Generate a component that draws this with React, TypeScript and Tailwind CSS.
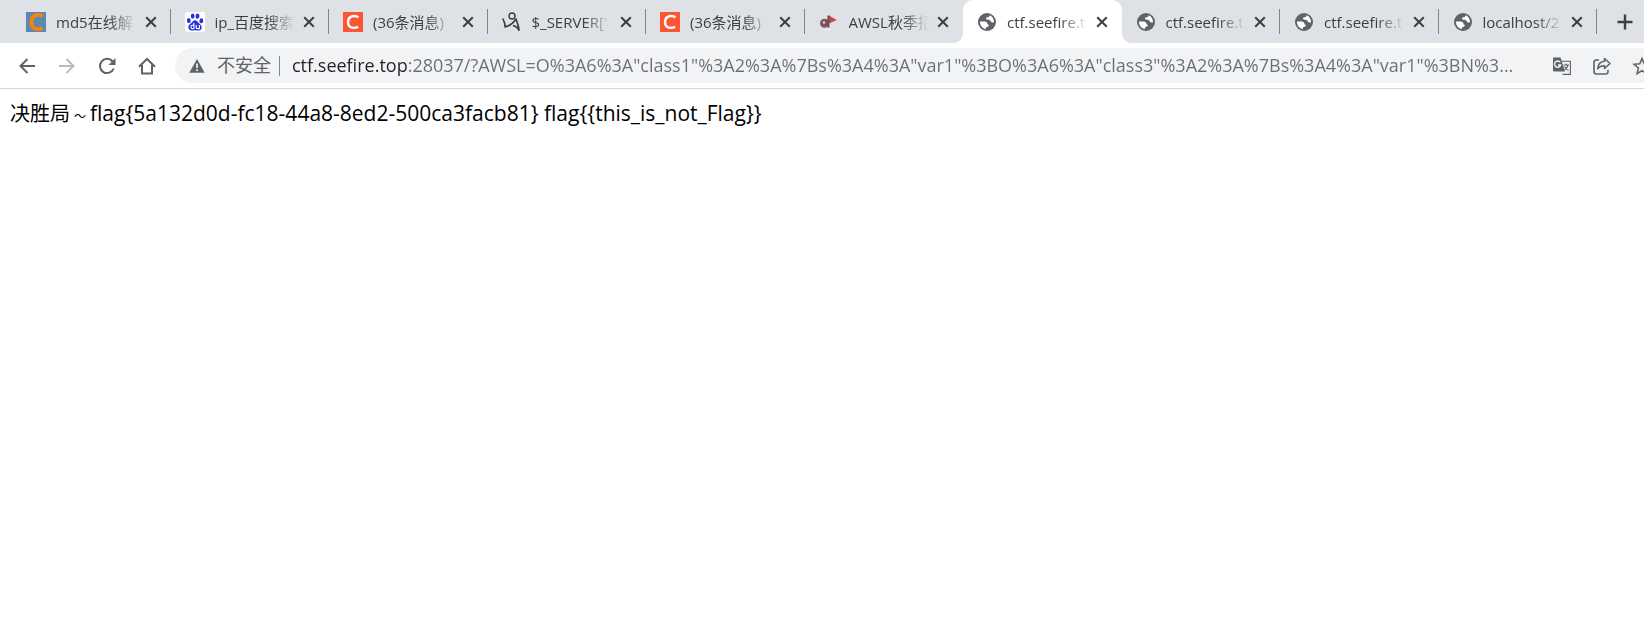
import React from "react";

const font = "font-['Open_Sans','Noto_Sans_CJK_SC',sans-serif]";

function GlobeIcon() {
  return (
    <svg viewBox="0 0 20 20" className="size-5" aria-hidden="true">
      <circle cx="10" cy="10" r="9" fill="#5f6368" />
      <path
        d="M12.600 3.200c-.2 1.500-1 2-2.300 2.100-1 .1-1.300.6-1.300 1.300 0 .8.6 1.100 1.500 1.100 2 0 3 .6 3.400 1.900.2.700.8.900 1.500.9H17c.2-3.600-1.700-6.200-4.400-7.300z"
        fill="#fff"
      />
      <path d="M3 9.600h4.600c1.700 0 2.900 1 2.900 2.500 0 .5.3.7.8.7h.6c0 1.300-.8 2.100-2.100 2.100-.6 0-.8.3-.8.800v1.200C5.600 16.600 3 13.700 3 10z" fill="#fff" />
    </svg>
  );
}

function OrangeCIcon() {
  return (
    <svg viewBox="0 0 20 20" className="size-5" aria-hidden="true">
      <path d="M0 0h20v20H0z" fill="#5b89b4" />
      <path d="M16.500 4.200C10.500.800 5.400 4.200 5.400 10s5 9.200 11.100 5.800" fill="none" stroke="#f98207" strokeWidth="3.800" />
    </svg>
  );
}

function PawIcon() {
  return (
    <svg viewBox="0 0 20 20" className="size-5" aria-hidden="true">
      <rect width="20" height="20" rx="2" fill="#fff" />
      <g fill="#2932e1">
        <ellipse cx="3.800" cy="8.600" rx="1.900" ry="2.500" transform="rotate(-10 3.800 8.600)" />
        <ellipse cx="7.700" cy="4.100" rx="1.900" ry="2.600" />
        <ellipse cx="12.500" cy="4.100" rx="1.900" ry="2.600" transform="rotate(10 12.500 4.100)" />
        <ellipse cx="16.300" cy="8.800" rx="1.900" ry="2.500" transform="rotate(10 16.300 8.800)" />
        <path d="M10 8.200c1.600 0 2.400 1.300 3.500 2.600 1.300 1.400 3.200 2.500 3.200 4.600 0 2-1.500 3.200-3.300 3.100-1.200 0-2.200-.3-3.400-.3s-2.200.4-3.400.3c-1.900 0-3.300-1.200-3.300-3.200 0-2 1.900-3.100 3.200-4.500C7.600 9.500 8.400 8.200 10 8.200z" />
      </g>
      <path d="M8.900 11v5.800M8.900 13.300H7.200c-1.600 0-1.600 3.300 0 3.300h1.700M11.200 13v2.600c0 .7.400 1 1 1h2.200V13" fill="none" stroke="#fff" strokeWidth="1.100" />
    </svg>
  );
}

function RedCIcon() {
  return (
    <svg viewBox="0 0 20 20" className="size-5" aria-hidden="true">
      <path d="M0 0h20v20H0z" fill="#fc5531" />
      <path d="M15.500 5.200C10 2.400 5 5 5 10.200c0 5 4.800 7 10.200 4.700" fill="none" stroke="#fff" strokeWidth="2.400" />
    </svg>
  );
}

function FigureIcon() {
  return (
    <svg viewBox="0 0 20 20" className="size-5" fill="none" stroke="#3c3c3c" aria-hidden="true">
      <circle cx="10" cy="4" r="3" strokeWidth="1.400" />
      <path d="M.8 6.500C2 9 3.200 11.500 3.200 14.800c4-.6 7.600-3.200 11-7.800" strokeWidth="1.700" />
      <path d="M13.800 6.500c1.500 3.600 2.800 7.800 3.400 12.300-1.200-3-3-4.500-6.200-5.300" strokeWidth="1.700" />
    </svg>
  );
}

function FlagIcon() {
  return (
    <svg viewBox="0 0 20 20" className="size-5" aria-hidden="true">
      <path d="M4 17h9l-2 2H6z" fill="#ebebed" />
      <path d="M10 3.500 17.800 8 10 11.500z" fill="#d2434b" />
      <circle cx="5.500" cy="11.200" r="3.400" fill="#b9303d" stroke="#6b6165" strokeWidth="2.200" />
      <path d="M9.400 3.500V15.500" stroke="#5d5256" strokeWidth="2" />
      <circle cx="5" cy="10.500" r="1.300" fill="#f4c6ca" />
    </svg>
  );
}

type TabData = { title: string; icon: React.ReactNode; active?: boolean; divider?: boolean };

const tabs: TabData[] = [
  { title: "md5在线解", icon: <OrangeCIcon />, divider: true },
  { title: "ip_百度搜索", icon: <PawIcon />, divider: true },
  { title: "(36条消息)", icon: <RedCIcon />, divider: true },
  { title: "$_SERVER['", icon: <FigureIcon />, divider: true },
  { title: "(36条消息)", icon: <RedCIcon />, divider: true },
  { title: "AWSL秋季招", icon: <FlagIcon /> },
  { title: "ctf.seefire.t", icon: <GlobeIcon />, active: true },
  { title: "ctf.seefire.t", icon: <GlobeIcon />, divider: true },
  { title: "ctf.seefire.t", icon: <GlobeIcon />, divider: true },
  { title: "localhost/2", icon: <GlobeIcon />, divider: true },
];

function Tab({ title, icon, active, divider }: TabData) {
  return (
    <div
      role="tab"
      aria-selected={!!active}
      className={`relative flex h-full min-w-0 flex-1 items-center pl-3.5 pr-2.5 ${active ? "rounded-t-[10px] bg-white" : ""}`}
    >
      {active && (
        <>
          <span className="absolute bottom-0 -left-2.5 size-2.5 bg-[radial-gradient(circle_at_0_0,transparent_10px,#fff_10px)]" />
          <span className="absolute bottom-0 -right-2.5 size-2.5 bg-[radial-gradient(circle_at_100%_0,transparent_10px,#fff_10px)]" />
        </>
      )}
      <span className="shrink-0">{icon}</span>
      <span className="ml-2.5 min-w-0 flex-1 overflow-hidden whitespace-nowrap text-[15px] leading-6 text-[#3c4043] [mask-image:linear-gradient(to_right,#000_65%,transparent)]">
        {title}
      </span>
      <button type="button" aria-label="关闭" className="ml-1 flex size-5 shrink-0 items-center justify-center">
        <svg viewBox="0 0 12 12" className="size-3" stroke="#3c4043" strokeWidth="2" aria-hidden="true">
          <path d="m1.200 1.200 9.600 9.600m0-9.600-9.600 9.600" />
        </svg>
      </button>
      {divider && <span className="absolute right-0 h-[25px] w-px bg-[#80868b]" />}
    </div>
  );
}

function ToolButton({ label, children }: { label: string; children: React.ReactNode }) {
  return (
    <button type="button" aria-label={label} className="flex h-9 w-10 shrink-0 items-center justify-center text-[#5f6368]">
      {children}
    </button>
  );
}

export default function App() {
  return (
    <div className={`min-h-screen overflow-hidden bg-white ${font}`}>
      <header>
        <div className="flex h-[43px] bg-[#dee1e6] pl-3">
          <div role="tablist" className="flex min-w-0 flex-1">
            {tabs.map((tab, i) => (
              <Tab key={i} {...tab} />
            ))}
          </div>
          <button type="button" aria-label="新标签页" className="flex w-[47px] shrink-0 items-center justify-center pl-2">
            <svg viewBox="0 0 16 16" className="size-4" stroke="#3c4043" strokeWidth="2.400" aria-hidden="true">
              <path d="M8 .500v15M.500 8h15" />
            </svg>
          </button>
        </div>

        <div className="flex h-[46px] items-center border-b border-[#d5d6d8] pl-[7px]">
          <ToolButton label="后退">
            <svg viewBox="0 0 16 16" className="size-4" fill="none" stroke="currentColor" strokeWidth="2" aria-hidden="true">
              <path d="M16 8H1.500M8.500 1 1.500 8l7 7" />
            </svg>
          </ToolButton>
          <ToolButton label="前进">
            <svg viewBox="0 0 16 16" className="size-4" fill="none" stroke="#babcbe" strokeWidth="2" aria-hidden="true">
              <path d="M0 8h14.500M7.500 1l7 7-7 7" />
            </svg>
          </ToolButton>
          <ToolButton label="重新加载">
            <svg viewBox="0 0 18 18" className="size-[18px]" aria-hidden="true">
              <path d="M15.700 11.500A7.100 7.100 0 1 1 14.600 4.500" fill="none" stroke="currentColor" strokeWidth="2" />
              <path d="M17.500 1v7h-7z" fill="currentColor" />
            </svg>
          </ToolButton>
          <ToolButton label="主页">
            <svg viewBox="0 0 18 18" className="size-[18px]" fill="none" stroke="currentColor" strokeWidth="2" aria-hidden="true">
              <path d="M1 9.800 9 2l8 7.800M4 8v8.500h10V8" />
            </svg>
          </ToolButton>

          <form className="ml-2 flex h-[35px] min-w-0 flex-1 items-center rounded-l-full bg-[#f1f3f4] pl-3.5" onSubmit={(e) => e.preventDefault()}>
            <button type="button" className="flex shrink-0 items-center gap-3 whitespace-nowrap text-lg leading-6 text-[#5f6368]">
              <svg viewBox="0 0 16 16" className="size-4" aria-hidden="true">
                <path d="M8 1 .300 14.800h15.400z" fill="#5f6368" />
                <path d="M8 5.500v4.600M8 11.200v1.800" stroke="#f1f3f4" strokeWidth="1.700" />
              </svg>
              <span className="pb-0.5">不安全</span>
            </button>
            <span className="mx-2 h-5 w-px shrink-0 bg-[#80868b]" />
            <input
              aria-label="地址和搜索栏"
              type="text"
              spellCheck={false}
              defaultValue={'ctf.seefire.top:28037/?AWSL=O%3A6%3A"class1"%3A2%3A%7Bs%3A4%3A"var1"%3BO%3A6%3A"class3"%3A2%3A%7Bs%3A4%3A"var1"%3BN%3...'}
              className="ml-1 h-full min-w-0 flex-1 bg-[linear-gradient(to_right,#202124_117px,#6b6e72_117px)] bg-clip-text pb-0.5 text-lg text-transparent outline-none"
            />
            <div className="-mr-[18px] flex shrink-0">
              <ToolButton label="翻译此页">
                <svg viewBox="0 0 20 20" className="size-5" aria-hidden="true">
                  <path d="M9 5.200h9.400v13.200h-7.900" fill="none" stroke="#5f6368" strokeWidth="1.100" />
                  <path d="M2.200 1.500h6.300l4.500 14H2.200A1.200 1.200 0 0 1 1 14.300V2.700A1.200 1.200 0 0 1 2.200 1.500z" fill="#5f6368" />
                  <path d="M8.200 6.400A3.100 3.100 0 1 0 8.600 9H6" fill="none" stroke="#f1f3f4" strokeWidth="1.400" />
                  <path d="M11.500 9h5.500M14 7.500V9M16 9c-.6 2.500-2 4-3.500 5M12.500 10.500c1 2 2.300 3.300 4 4" fill="none" stroke="#5f6368" strokeWidth="1.100" />
                </svg>
              </ToolButton>
              <ToolButton label="分享此页">
                <svg viewBox="0 0 20 20" className="size-5" fill="none" stroke="currentColor" strokeWidth="1.600" aria-hidden="true">
                  <path d="M7 4H4.500A2.500 2.500 0 0 0 2 6.500v9A2.500 2.500 0 0 0 4.500 18h9a2.500 2.500 0 0 0 2.500-2.500V14" />
                  <path d="M12.500 2.500 18 7.500l-5.500 5V9.700c-3.500 0-5.300 1-6.800 3 .3-4.300 2.600-7 6.800-7.400z" strokeLinejoin="round" />
                </svg>
              </ToolButton>
              <ToolButton label="为此标签页添加书签">
                <svg viewBox="0 0 20 20" className="size-5" fill="none" stroke="currentColor" strokeWidth="1.600" aria-hidden="true">
                  <path d="m10 2.500 2.200 5.300 5.700.5-4.300 3.700 1.300 5.600-4.900-3-4.900 3 1.300-5.600-4.300-3.700 5.700-.5z" />
                </svg>
              </ToolButton>
            </div>
          </form>
        </div>
      </header>

      <main className="px-2.5 py-2.5 text-xl leading-7 text-black">
        决胜局<span className="inline-block w-5 text-center text-xs">～</span>
        <span className="text-[21px]">flag&#123;5a132d0d-fc18-44a8-8ed2-500ca3facb81&#125; flag&#123;&#123;this_is_not_Flag&#125;&#125;</span>
      </main>
    </div>
  );
}
